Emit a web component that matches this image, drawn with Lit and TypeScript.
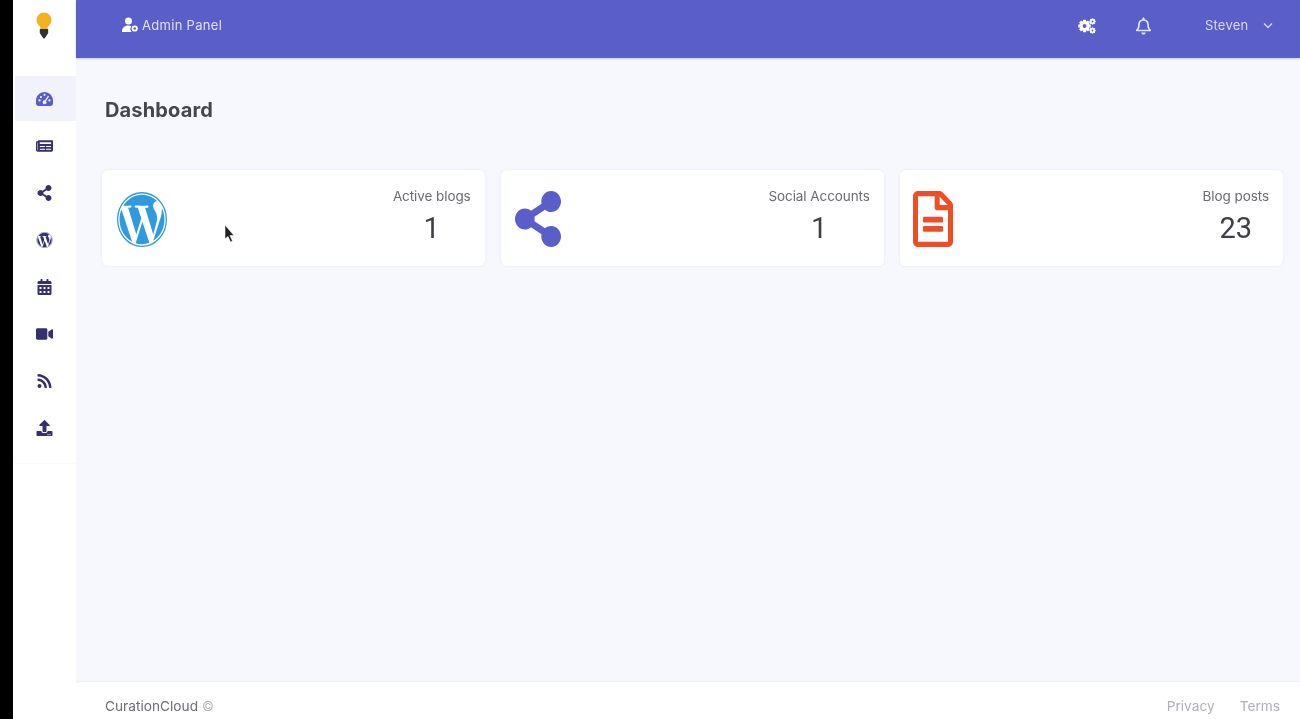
import { LitElement, html, css, svg } from "lit";
import { customElement } from "lit/decorators.js";

const P = {
  news: ["0 0 576 512", "M552 64H88c-13.255 0-24 10.745-24 24v8H24c-13.255 0-24 10.745-24 24v272c0 30.928 25.072 56 56 56h472c26.51 0 48-21.49 48-48V88c0-13.255-10.745-24-24-24zM56 400a8 8 0 0 1-8-8V144h16v248a8 8 0 0 1-8 8zm236-16H140c-6.627 0-12-5.373-12-12v-8c0-6.627 5.373-12 12-12h152c6.627 0 12 5.373 12 12v8c0 6.627-5.373 12-12 12zm208 0H348c-6.627 0-12-5.373-12-12v-8c0-6.627 5.373-12 12-12h152c6.627 0 12 5.373 12 12v8c0 6.627-5.373 12-12 12zm-208-96H140c-6.627 0-12-5.373-12-12v-8c0-6.627 5.373-12 12-12h152c6.627 0 12 5.373 12 12v8c0 6.627-5.373 12-12 12zm208 0H348c-6.627 0-12-5.373-12-12v-8c0-6.627 5.373-12 12-12h152c6.627 0 12 5.373 12 12v8c0 6.627-5.373 12-12 12zm0-96H140c-6.627 0-12-5.373-12-12v-40c0-6.627 5.373-12 12-12h360c6.627 0 12 5.373 12 12v40c0 6.627-5.373 12-12 12z"],
  share: ["0 0 448 512", "M352 320c-22.608 0-43.387 7.819-59.79 20.895l-102.486-64.054a96.551 96.551 0 0 0 0-41.683l102.486-64.054C308.613 184.181 329.392 192 352 192c53.019 0 96-42.981 96-96S405.019 0 352 0s-96 42.981-96 96c0 7.158.79 14.13 2.276 20.841L155.79 180.895C139.387 167.819 118.608 160 96 160c-53.019 0-96 42.981-96 96s42.981 96 96 96c22.608 0 43.387-7.819 59.79-20.895l102.486 64.054A96.301 96.301 0 0 0 256 416c0 53.019 42.981 96 96 96s96-42.981 96-96-42.981-96-96-96z"],
  cal: ["0 0 448 512", "M0 464c0 26.5 21.5 48 48 48h352c26.5 0 48-21.5 48-48V192H0v272zm320-196c0-6.6 5.4-12 12-12h40c6.6 0 12 5.4 12 12v40c0 6.6-5.4 12-12 12h-40c-6.6 0-12-5.4-12-12v-40zm0 128c0-6.6 5.4-12 12-12h40c6.6 0 12 5.4 12 12v40c0 6.6-5.4 12-12 12h-40c-6.6 0-12-5.4-12-12v-40zM192 268c0-6.6 5.4-12 12-12h40c6.6 0 12 5.4 12 12v40c0 6.6-5.4 12-12 12h-40c-6.6 0-12-5.4-12-12v-40zm0 128c0-6.6 5.4-12 12-12h40c6.6 0 12 5.4 12 12v40c0 6.6-5.4 12-12 12h-40c-6.6 0-12-5.4-12-12v-40zM64 268c0-6.6 5.4-12 12-12h40c6.6 0 12 5.4 12 12v40c0 6.6-5.4 12-12 12H76c-6.6 0-12-5.4-12-12v-40zm0 128c0-6.6 5.4-12 12-12h40c6.6 0 12 5.4 12 12v40c0 6.6-5.4 12-12 12H76c-6.6 0-12-5.4-12-12v-40zM400 64h-48V16c0-8.8-7.2-16-16-16h-32c-8.8 0-16 7.2-16 16v48H160V16c0-8.8-7.2-16-16-16h-32c-8.8 0-16 7.2-16 16v48H48C21.5 64 0 85.5 0 112v48h448v-48c0-26.5-21.5-48-48-48z"],
  video: ["0 0 576 512", "M336.2 64H47.8C21.4 64 0 85.4 0 111.8v288.4C0 426.6 21.4 448 47.8 448h288.4c26.4 0 47.8-21.4 47.8-47.8V111.8c0-26.4-21.4-47.8-47.8-47.8zm189.4 37.7L416 177.3v157.4l109.6 75.5c21.2 14.6 50.4-.3 50.4-25.8V127.5c0-25.4-29.1-40.4-50.4-25.8z"],
  rss: ["0 0 448 512", "M128.081 415.959c0 35.369-28.672 64.041-64.041 64.041S0 451.328 0 415.959s28.672-64.041 64.041-64.041 64.04 28.673 64.04 64.041zm175.66 47.25c-8.354-154.6-132.185-278.587-286.95-286.95C7.656 175.765 0 183.105 0 192.253v48.069c0 8.415 6.49 15.472 14.887 16.018 111.832 7.284 201.473 96.702 208.772 208.772.547 8.397 7.604 14.887 16.018 14.887h48.069c9.149.001 16.489-7.655 15.995-16.79zm144.249.288C439.596 229.677 251.465 40.445 16.503 32.01 7.473 31.686 0 38.981 0 48.016v48.068c0 8.625 6.835 15.645 15.453 15.999 191.179 7.839 344.627 161.316 352.465 352.465.353 8.618 7.373 15.453 15.999 15.453h48.068c9.034-.001 16.329-7.474 16.005-16.504z"],
  upload: ["0 0 512 512", "M296 384h-80c-13.3 0-24-10.7-24-24V192h-87.7c-17.8 0-26.7-21.5-14.1-34.1L242.3 5.7c7.5-7.5 19.8-7.5 27.3 0l152.2 152.2c12.6 12.6 3.7 34.1-14.1 34.1H320v168c0 13.3-10.7 24-24 24zm216-8v112c0 13.3-10.7 24-24 24H24c-13.3 0-24-10.7-24-24V376c0-13.3 10.7-24 24-24h136v8c0 30.9 25.1 56 56 56h80c30.9 0 56-25.1 56-56v-8h136c13.3 0 24 10.7 24 24zm-124 88c0-11-9-20-20-20s-20 9-20 20 9 20 20 20 20-9 20-20zm64 0c0-11-9-20-20-20s-20 9-20 20 9 20 20 20 20-9 20-20z"],
  gauge: ["0 0 24 22", "M12 1C5.4 1 0 6.4 0 13v4.5C0 19.4 1.6 21 3.5 21h17c1.9 0 3.5-1.6 3.5-3.5V13c0-6.600-5.400-12-12-12zM12 3.500a1.600 1.600 0 1 1 0 3.200 1.600 1.600 0 0 1 0-3.200zM5 11.500a1.600 1.600 0 1 1 0 3.200 1.600 1.600 0 0 1 0-3.200zm2-4.900a1.600 1.600 0 1 1 0 3.200 1.600 1.600 0 0 1 0-3.200zM19 11.500a1.600 1.600 0 1 1 0 3.200 1.600 1.600 0 0 1 0-3.200zM16.900 6.500l1.500 1-4.300 6.500a2.600 2.600 0 1 1-1.600-1z"],
  file: ["0 0 384 512", "M288 248v28c0 6.6-5.400 12-12 12H108c-6.600 0-12-5.400-12-12v-28c0-6.600 5.400-12 12-12h168c6.600 0 12 5.400 12 12zm-12 72H108c-6.600 0-12 5.400-12 12v28c0 6.600 5.400 12 12 12h168c6.600 0 12-5.400 12-12v-28c0-6.600-5.400-12-12-12zm108-188.100V464c0 26.500-21.500 48-48 48H48c-26.500 0-48-21.500-48-48V48C0 21.500 21.500 0 48 0h204.100C264.800 0 277 5.100 286 14.100L369.900 98c9 8.900 14.100 21.200 14.100 33.900zm-128-80V128h76.100L256 51.900zM336 464V176H232c-13.300 0-24-10.700-24-24V48H48v416h288z"],
  bell: ["0 0 448 512", "M439.390 362.290c-19.320-20.760-55.470-51.990-55.470-154.290 0-77.700-54.480-139.900-127.940-155.160V32c0-17.670-14.320-32-31.980-32s-31.980 14.330-31.980 32v20.840C118.560 68.100 64.080 130.300 64.080 208c0 102.300-36.150 133.530-55.470 154.290-6 6.450-8.660 14.160-8.610 21.710.11 16.400 12.980 32 32.100 32h383.800c19.120 0 32-15.600 32.100-32 .05-7.550-2.610-15.270-8.610-21.710zM67.530 368c21.220-27.970 44.420-74.330 44.530-159.420 0-.2-.06-.38-.06-.58 0-61.860 50.140-112 112-112s112 50.140 112 112c0 .2-.06.38-.06.58.11 85.100 23.310 131.460 44.530 159.420H67.530zM224 512c35.320 0 63.970-28.650 63.970-64H160.030c0 35.350 28.650 64 63.970 64z"],
};
const WP = "M21.469 6.825c.84 1.537 1.318 3.3 1.318 5.175 0 3.979-2.156 7.456-5.363 9.325l3.295-9.527c.615-1.54.82-2.771.82-3.864 0-.405-.026-.78-.07-1.11m-7.981.105c.647-.03 1.232-.105 1.232-.105.582-.075.514-.93-.067-.899 0 0-1.755.135-2.88.135-1.064 0-2.85-.15-2.85-.15-.585-.03-.661.855-.075.885 0 0 .54.061 1.125.09l1.68 4.605-2.37 7.08L5.354 6.9c.649-.03 1.234-.1 1.234-.1.585-.075.516-.93-.065-.896 0 0-1.746.138-2.874.138-.2 0-.438-.008-.69-.015C4.911 3.15 8.235 1.215 12 1.215c2.809 0 5.365 1.072 7.286 2.833-.046-.003-.091-.009-.141-.009-1.06 0-1.812.923-1.812 1.914 0 .89.513 1.643 1.06 2.531.411.72.89 1.643.89 2.977 0 .915-.354 1.994-.821 3.479l-1.075 3.585-3.9-11.61.001.014zM12 22.784c-1.059 0-2.081-.153-3.048-.437l3.237-9.406 3.315 9.087c.024.053.05.101.078.149-1.12.393-2.325.609-3.582.609M1.211 12c0-1.564.336-3.05.935-4.39L7.29 21.709C3.694 19.96 1.212 16.271 1.211 12";

const ic = (k: keyof typeof P, cls: string, stretch = false) => html`<svg class=${cls} viewBox=${P[k][0]} preserveAspectRatio=${stretch ? "none" : "xMidYMid meet"} fill="currentColor"><path d=${P[k][1]}></path></svg>`;

const wp = (cls: string, stretch = false) => html`<svg class=${cls} viewBox="0 0 24 24" preserveAspectRatio=${stretch ? "none" : "xMidYMid meet"}>
  <circle cx="12" cy="12" r="11.700" fill="none" stroke="currentColor" stroke-width=".6"></circle>
  <path d=${WP} fill="currentColor"></path>
</svg>`;

const gear = (cx: number, cy: number, r: number) => {
  const teeth = [0, 45, 90, 135].map(a => svg`<rect x=${cx - r * 0.3} y=${cy - r * 1.25} width=${r * 0.6} height=${r * 2.5} transform=${`rotate(${a} ${cx} ${cy})`}></rect>`);
  return svg`${teeth}<circle cx=${cx} cy=${cy} r=${r}></circle><circle cx=${cx} cy=${cy} r=${r * 0.38} fill="#5a5ec9"></circle>`;
};

@customElement("app-root")
export class AppRoot extends LitElement {
  static styles = css`
    :host { display: flex; height: 719px; width: 1300px; overflow: hidden; background: #000; font-family: Inter, "Liberation Sans", sans-serif; }
    svg, span, h1 { filter: blur(.4px); }
    .strip { width: 13px; flex: none; background: #000; }
    .side { width: 63px; flex: none; background: #fff; display: flex; flex-direction: column; }
    .logo { height: 76px; flex: none; display: flex; justify-content: center; padding: 12px 2px 0 0; box-sizing: border-box; }
    .logo svg { width: 16px; height: 27px; }
    nav { display: flex; flex-direction: column; gap: 2px; margin-left: 2px; padding-bottom: 13px; border-bottom: 1px solid #fafafc; }
    .item { height: 45px; display: flex; align-items: center; justify-content: center; padding-right: 3px; color: #35316e; }
    .item.on { background: #f1f2fb; color: #5a5ec9; }
    .ni { width: 17px; height: 16px; }
    .main { flex: 1; min-width: 0; display: flex; flex-direction: column; background: #f7f8fd; }
    header { height: 58px; flex: none; box-sizing: border-box; background: #5a5ec9; box-shadow: 0 1px 2px #c9cbee; display: flex; align-items: center; padding: 0 0 8px 46px; color: #dfe0f6; font-size: 13px; position: relative; }
    .adm { display: flex; align-items: center; gap: 4px; letter-spacing: .3px; }
    .adm svg { width: 16px; height: 16px; color: #fff; }
    .right { margin-left: auto; display: flex; align-items: center; color: #d6d8f3; }
    .cogs { width: 18px; height: 16px; color: #fff; margin: 2px 40px 0 0; }
    .bell { width: 15px; height: 18px; color: #e4e5f8; margin: 2px 54px 0 0; }
    .name { width: 44px; margin-right: 14px; letter-spacing: .2px; }
    .chev { width: 10px; height: 7px; margin-right: 27px; }
    .content { flex: 1; padding: 0 17px 0 26px; }
    h1 { margin: 38px 0 46px 3px; height: 28px; line-height: 28px; font-size: 20px; font-weight: 700; color: #45454d; letter-spacing: .15px; }
    .cards { display: grid; grid-template-columns: repeat(3, 1fr); gap: 16.5px; }
    .card { position: relative; height: 96px; background: #fff; border-radius: 6px; box-shadow: 0 0 3px #e6e8f1; display: flex; align-items: center; justify-content: space-between; padding: 0 14px; }
    .big { height: 56px; flex: none; margin-top: 2px; }
    .wp { width: 50px; height: 55px; color: #2f9ae0; margin-left: 1px; }
    .sh { width: 46px; color: #5a5ec9; }
    .fi { width: 40px; color: #ee4d26; margin-left: -1px; }
    .stat { display: flex; flex-direction: column; align-items: center; margin-top: -4px; }
    .lbl { font-size: 13.5px; line-height: 18px; color: #6b6b72; letter-spacing: -.08px; }
    .num { margin-top: 5px; font: 400 29px/36px Roboto, sans-serif; color: #3f3f46; }
    .cursor { position: absolute; left: 122px; top: 55px; width: 11px; height: 18px; }
    footer { height: 38px; flex: none; background: #fff; border-top: 1px solid #eeeff5; display: flex; align-items: center; padding: 11px 20px 0 29px; box-sizing: border-box; font-size: 13.7px; color: #6d6d74; }
    .copy { margin-left: 4px; color: #b5b5bc; font-size: 13px; }
    .links { margin-left: auto; display: flex; gap: 25px; color: #b0b0b7; }
  `;

  render() {
    const items = ["gauge", "news", "share", "wp", "cal", "video", "rss", "upload"];
    return html`
      <div class="strip"></div>
      <aside class="side">
        <div class="logo">
          <svg viewBox="0 0 16 27">
            <circle cx="8" cy="8" r="7.500" fill="#f3b321"></circle>
            <path d="M4 12h8l-.5 6h-7z" fill="#f3b321"></path>
            <path d="M3.800 17h8.400v4l-2.200 3.500-2 2.500-2-2.500-2.200-3.500z" fill="#33322f"></path>
          </svg>
        </div>
        <nav>
          ${items.map((k, i) => html`<div class="item ${i === 0 ? "on" : ""}">${k === "wp" ? wp("ni") : ic(k as keyof typeof P, "ni")}</div>`)}
        </nav>
      </aside>
      <div class="main">
        <header>
          <div class="adm">
            <svg viewBox="0 0 16 16" fill="currentColor">
              <circle cx="6.500" cy="4" r="3.500"></circle>
              <path d="M0 14.500c0-3.500 2.500-6 6-6 1.500 0 2.500.4 3.300 1a4 4 0 0 0 .5 5.500H0z"></path>
              <circle cx="12.700" cy="11.500" r="2.200" fill="none" stroke="currentColor" stroke-width="1.800"></circle>
            </svg>
            <span>Admin Panel</span>
          </div>
          <div class="right">
            <svg class="cogs" viewBox="0 0 18 16" fill="currentColor">${gear(6.5, 8, 5)}${gear(14.5, 3.5, 2.5)}${gear(14.5, 12.5, 2.5)}</svg>
            ${ic("bell", "bell")}
            <span class="name">Steven</span>
            <svg class="chev" viewBox="0 0 10 7" fill="none" stroke="currentColor" stroke-width="1.400"><path d="M1 1.500l4 4 4-4"></path></svg>
          </div>
        </header>
        <div class="content">
          <h1>Dashboard</h1>
          <div class="cards">
            <div class="card">
              ${wp("big wp", true)}
              <div class="stat"><span class="lbl">Active blogs</span><span class="num">1</span></div>
              <svg class="cursor" viewBox="0 0 11 18"><path d="M1 0l9 10.500H6l2.500 5.500-2 1-2.500-5.500L1 14z" fill="#222" stroke="#fff" stroke-width=".6"></path></svg>
            </div>
            <div class="card">
              ${ic("share", "big sh", true)}
              <div class="stat"><span class="lbl">Social Accounts</span><span class="num">1</span></div>
            </div>
            <div class="card">
              ${ic("file", "big fi", true)}
              <div class="stat"><span class="lbl">Blog posts</span><span class="num">23</span></div>
            </div>
          </div>
        </div>
        <footer>
          <span>CurationCloud</span><span class="copy">©</span>
          <div class="links"><span>Privacy</span><span>Terms</span></div>
        </footer>
      </div>
    `;
  }
}
